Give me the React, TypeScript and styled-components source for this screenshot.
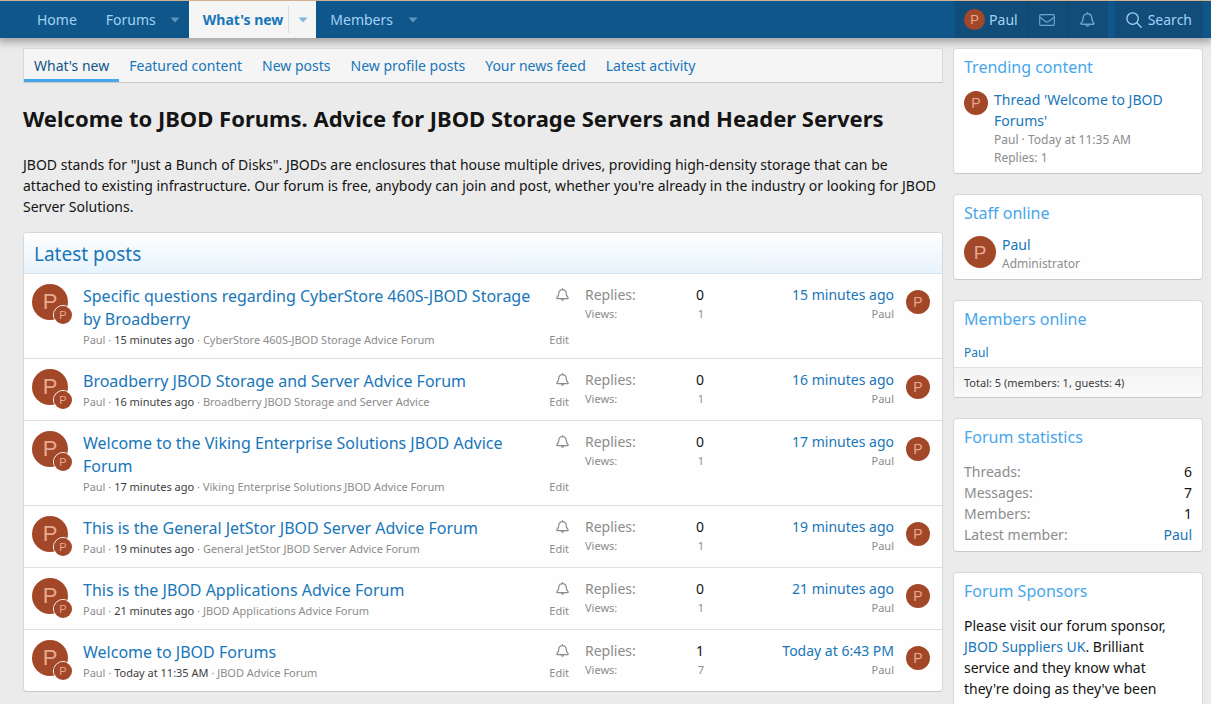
import React from "react";
import styled, { createGlobalStyle, css } from "styled-components";

const GlobalStyle = createGlobalStyle`
  *, *::before, *::after { box-sizing: border-box; }
  html { background: #ebebeb; }
  body {
    margin: 0;
    background: #ebebeb;
    color: #141414;
    font-family: "Noto Sans", "Open Sans", sans-serif;
    font-size: 14px;
    line-height: 21px;
  }
  h1, h2, h3, p, ul, dl, dd { margin: 0; padding: 0; }
  ul { list-style: none; }
  a { color: #1876b9; text-decoration: none; }
  a:hover { text-decoration: underline; }
  button { font: inherit; cursor: pointer; }
`;

const Page = styled.div`
  display: flex;
  flex-direction: column;
  min-height: 100vh;
`;

/* Header navigation */
const NavBar = styled.nav`
  display: flex;
  justify-content: space-between;
  height: 38px;
  padding: 0 8px 0 23px;
  border-top: 1px solid #cfb291;
  background: #0f578a;
  box-shadow: 0 2px 8px 2px rgba(0, 0, 0, 0.32);
`;

const NavList = styled.ul`
  display: flex;
`;

const NavItem = styled.li<{ $active?: boolean }>`
  display: flex;
  align-items: center;
  color: #a3d2f5;
  ${(p) => p.$active && css`
    background: #f5f5f5;
    color: #1876b9;
    font-weight: 700;
  `}
`;

const NavLink = styled.a<{ $plain?: boolean }>`
  padding: 0 ${(p) => (p.$plain ? 15 : 5)}px 0 14px;
  color: inherit;
`;

const NavArrow = styled.button<{ $active?: boolean }>`
  display: flex;
  align-items: center;
  justify-content: center;
  width: 28px;
  height: 27px;
  padding: 0;
  border: 0;
  border-left: 1px solid ${(p) => (p.$active ? "#cfdfeb" : "transparent")};
  background: none;
  color: ${(p) => (p.$active ? "#7fb5dc" : "#5a96c2")};
`;

const Tools = styled.div`
  display: flex;
  gap: 7px;
`;

const ToolGroup = styled.div`
  display: flex;
  background: #114d78;
`;

const Tool = styled.button`
  display: flex;
  align-items: center;
  gap: 4px;
  min-width: 40px;
  justify-content: center;
  padding: 0 9px;
  border: 0;
  border-right: 1px solid #10466d;
  background: none;
  color: #a3d2f5;
  &:last-child { border-right: 0; }
`;

const SearchTool = styled(Tool)`
  gap: 6px;
  padding: 0 11px;
`;

const MutedIcon = styled.span`
  display: flex;
  color: #6fa5cc;
`;

/* Avatars */
const Avatar = styled.span<{ $size: number }>`
  display: flex;
  align-items: center;
  justify-content: center;
  flex: none;
  width: ${(p) => p.$size}px;
  height: ${(p) => p.$size}px;
  border-radius: 50%;
  background: #a34729;
  color: #e6a98f;
  font-family: "Liberation Sans", Arial, sans-serif;
  font-size: ${(p) => Math.round(p.$size * 0.6)}px;
  line-height: 1;
`;

const AvatarStack = styled.a`
  position: relative;
  flex: none;
  width: 40px;
  height: 40px;
  margin-right: 11px;
`;

const AvatarBadge = styled.span`
  position: absolute;
  right: -1px;
  bottom: -1px;
  display: flex;
  border: 1px solid #fff;
  border-radius: 50%;
`;

/* Body */
const Body = styled.div`
  display: flex;
  flex: 1;
  gap: 10px;
  padding: 10px 8px 0 23px;
`;

const Main = styled.main`
  flex: 1;
  min-width: 0;
`;

const Tabs = styled.nav`
  display: flex;
  height: 35px;
  border: 1px solid #d8d8d8;
  border-bottom-color: #c8c8c8;
  background: #f5f5f5;
`;

const Tab = styled.a<{ $active?: boolean }>`
  padding: 6px 10px 0;
  border-bottom: 3px solid ${(p) => (p.$active ? "#47a7eb" : "transparent")};
  color: ${(p) => (p.$active ? "#0f578a" : "#1876b9")};
  white-space: nowrap;
`;

const PageTitle = styled.h1`
  margin-top: 19px;
  font-size: 22px;
  line-height: 33px;
  font-weight: 700;
`;

const Intro = styled.p`
  margin-top: 19px;
`;

const Block = styled.section`
  margin: 15px 0 14px;
  border: 1px solid #d8d8d8;
  border-bottom-color: #c8c8c8;
  border-radius: 4px;
  background: #fefefe;
  overflow: hidden;
`;

const BlockTitle = styled.h2`
  height: 41px;
  padding: 7px 10px 5px;
  border-bottom: 1px solid #d8e2ea;
  background: linear-gradient(#fefefe, #e7f3fc);
  color: #1876b9;
  font-size: 19px;
  line-height: 28px;
  font-weight: 400;
`;

const Row = styled.article`
  display: flex;
  align-items: flex-start;
  padding: 10px 12px 9px 8px;
  border-bottom: 1px solid #dfdfdf;
  &:last-child { border-bottom: 0; }
`;

const Thread = styled.div`
  display: grid;
  grid-template-columns: 1fr auto;
  column-gap: 8px;
  flex: 1;
  min-width: 0;
  padding-top: 1px;
`;

const ThreadTitle = styled.h3`
  font-size: 16px;
  line-height: 23px;
  font-weight: 400;
`;

const Minor = styled.div`
  color: #8c8c8c;
  font-size: 11px;
  line-height: 18px;
  a { color: inherit; }
  time { color: #3d3d3d; }
`;

const Watch = styled.button`
  justify-self: end;
  align-self: start;
  display: flex;
  padding: 3px 0 0;
  border: 0;
  background: none;
  color: #8c8c8c;
`;

const Stats = styled.dl`
  width: 119px;
  margin-left: 16px;
`;

const Pair = styled.div<{ $minor?: boolean }>`
  display: flex;
  justify-content: space-between;
  dt { color: #8c8c8c; }
  ${(p) => p.$minor && css`
    color: #8c8c8c;
    font-size: 11px;
    line-height: 17px;
  `}
`;

const Latest = styled.div`
  width: 190px;
  margin-right: 12px;
  text-align: right;
`;

const LatestAvatar = styled.a`
  margin-top: 6px;
`;

/* Sidebar */
const Sidebar = styled.aside`
  display: flex;
  flex-direction: column;
  gap: 20px;
  flex: none;
  width: 250px;
`;

const Card = styled.section<{ $grow?: boolean }>`
  border: 1px solid #d8d8d8;
  border-bottom-color: #c8c8c8;
  border-radius: 4px;
  background: #fefefe;
  ${(p) => p.$grow && css`
    flex: 1;
    border-bottom: 0;
    border-radius: 4px 4px 0 0;
  `}
`;

const CardTitle = styled.h3`
  padding: 6px 10px;
  color: #47a7eb;
  font-size: 16px;
  line-height: 25px;
  font-weight: 400;
`;

const CardBody = styled.div<{ $top?: number }>`
  padding: ${(p) => p.$top ?? 5}px 10px 6px;
`;

const MediaRow = styled.div`
  display: flex;
  align-items: flex-start;
  gap: 6px;
  ${Avatar} { margin-top: 2px; }
`;

const MediaText = styled.div`
  flex: 1;
  min-width: 0;
`;

const Small = styled.div`
  color: #8c8c8c;
  font-size: 12px;
  line-height: 18px;
`;

const MemberLink = styled.a`
  display: block;
  padding: 5px 10px;
  font-size: 12px;
  line-height: 19px;
`;

const CardFooter = styled.div`
  padding: 6px 10px;
  border-top: 1px solid #dfdfdf;
  border-radius: 0 0 4px 4px;
  background: linear-gradient(#f3f3f3, #fafafa);
  color: #3d3d3d;
  font-size: 11px;
  line-height: 17px;
`;

const Caret = () => (
  <svg width="10" height="6" viewBox="0 0 10 6" aria-hidden="true">
    <path d="M.5.5h9L5 5.5z" fill="currentColor" />
  </svg>
);

const BellIcon = ({ size = 13 }: { size?: number }) => (
  <svg width={size} height={size} viewBox="0 0 14 14" fill="none" stroke="currentColor" strokeWidth="1.3" strokeLinejoin="round" strokeLinecap="round" aria-hidden="true">
    <path d="M7 .7v1M7 1.7C4.5 1.7 3 3.5 3 5.6c0 2.7-.7 3.6-2 4.8-.4.4-.1 1 .4 1h11.2c.5 0 .8-.6.4-1-1.3-1.2-2-2.1-2-4.8 0-2.1-1.5-3.9-4-3.9z" />
    <path d="M5.5 12.5c.3 1.4 2.7 1.4 3 0z" fill="currentColor" strokeWidth=".6" />
  </svg>
);

const MailIcon = () => (
  <svg width="16" height="12" viewBox="0 0 16 12" fill="none" stroke="currentColor" strokeWidth="1.2" strokeLinejoin="round" aria-hidden="true">
    <rect x=".7" y=".7" width="14.6" height="10.6" rx="1.3" />
    <path d="M.9 3.2 6.5 7.5c1 .8 2 .8 3 0l5.6-4.3" />
  </svg>
);

const SearchIcon = () => (
  <svg width="16" height="16" viewBox="0 0 16 16" fill="none" stroke="currentColor" strokeWidth="1.3" strokeLinecap="round" aria-hidden="true">
    <circle cx="6.6" cy="6.6" r="5.7" />
    <path d="m10.8 10.8 4.4 4.4" />
  </svg>
);

const tabs = ["What's new", "Featured content", "New posts", "New profile posts", "Your news feed", "Latest activity"];

const threads = [
  { title: "Specific questions regarding CyberStore 460S-JBOD Storage by Broadberry", time: "15 minutes ago", forum: "CyberStore 460S-JBOD Storage Advice Forum", replies: 0, views: 1 },
  { title: "Broadberry JBOD Storage and Server Advice Forum", time: "16 minutes ago", forum: "Broadberry JBOD Storage and Server Advice", replies: 0, views: 1 },
  { title: "Welcome to the Viking Enterprise Solutions JBOD Advice Forum", time: "17 minutes ago", forum: "Viking Enterprise Solutions JBOD Advice Forum", replies: 0, views: 1 },
  { title: "This is the General JetStor JBOD Server Advice Forum", time: "19 minutes ago", forum: "General JetStor JBOD Server Advice Forum", replies: 0, views: 1 },
  { title: "This is the JBOD Applications Advice Forum", time: "21 minutes ago", forum: "JBOD Applications Advice Forum", replies: 0, views: 1 },
  { title: "Welcome to JBOD Forums", time: "Today at 11:35 AM", latest: "Today at 6:43 PM", forum: "JBOD Advice Forum", replies: 1, views: 7 },
];

const statistics = [
  ["Threads:", "6"],
  ["Messages:", "7"],
  ["Members:", "1"],
];

export default function App() {
  return (
    <Page>
      <GlobalStyle />
      <NavBar aria-label="Main">
        <NavList>
          <NavItem><NavLink href="#" $plain>Home</NavLink></NavItem>
          <NavItem>
            <NavLink href="#">Forums</NavLink>
            <NavArrow aria-label="Open Forums menu"><Caret /></NavArrow>
          </NavItem>
          <NavItem $active>
            <NavLink href="#">What's new</NavLink>
            <NavArrow $active aria-label="Open What's new menu"><Caret /></NavArrow>
          </NavItem>
          <NavItem>
            <NavLink href="#">Members</NavLink>
            <NavArrow aria-label="Open Members menu"><Caret /></NavArrow>
          </NavItem>
        </NavList>
        <Tools>
          <ToolGroup>
            <Tool><Avatar $size={21}>P</Avatar>Paul</Tool>
            <Tool aria-label="Conversations"><MutedIcon><MailIcon /></MutedIcon></Tool>
            <Tool aria-label="Alerts"><MutedIcon><BellIcon size={15} /></MutedIcon></Tool>
          </ToolGroup>
          <ToolGroup>
            <SearchTool><SearchIcon />Search</SearchTool>
          </ToolGroup>
        </Tools>
      </NavBar>

      <Body>
        <Main>
          <Tabs aria-label="What's new">
            {tabs.map((t, i) => <Tab key={t} href="#" $active={i === 0}>{t}</Tab>)}
          </Tabs>
          <PageTitle>Welcome to JBOD Forums. Advice for JBOD Storage Servers and Header Servers</PageTitle>
          <Intro>
            JBOD stands for "Just a Bunch of Disks". JBODs are enclosures that house multiple drives, providing high-density storage that can be attached to existing infrastructure. Our forum is free, anybody can join and post, whether you're already in the industry or looking for JBOD Server Solutions.
          </Intro>
          <Block>
            <BlockTitle>Latest posts</BlockTitle>
            {threads.map((t) => (
              <Row key={t.title}>
                <AvatarStack href="#" aria-label="Paul">
                  <Avatar $size={36}>P</Avatar>
                  <AvatarBadge><Avatar $size={18}>P</Avatar></AvatarBadge>
                </AvatarStack>
                <Thread>
                  <ThreadTitle><a href="#">{t.title}</a></ThreadTitle>
                  <Watch aria-label="Watched thread"><BellIcon /></Watch>
                  <Minor><a href="#">Paul</a> · <time>{t.time}</time> · <a href="#">{t.forum}</a></Minor>
                  <Minor><a href="#">Edit</a></Minor>
                </Thread>
                <Stats>
                  <Pair><dt>Replies:</dt><dd>{t.replies}</dd></Pair>
                  <Pair $minor><dt>Views:</dt><dd>{t.views}</dd></Pair>
                </Stats>
                <Latest>
                  <a href="#">{t.latest ?? t.time}</a>
                  <Minor><a href="#">Paul</a></Minor>
                </Latest>
                <LatestAvatar href="#" aria-label="Paul"><Avatar $size={24}>P</Avatar></LatestAvatar>
              </Row>
            ))}
          </Block>
        </Main>

        <Sidebar>
          <Card>
            <CardTitle>Trending content</CardTitle>
            <CardBody $top={3}>
              <MediaRow>
                <Avatar $size={24}>P</Avatar>
                <MediaText>
                  <a href="#">Thread 'Welcome to JBOD Forums'</a>
                  <Small>Paul · Today at 11:35 AM</Small>
                  <Small>Replies: 1</Small>
                </MediaText>
              </MediaRow>
            </CardBody>
          </Card>
          <Card>
            <CardTitle>Staff online</CardTitle>
            <CardBody $top={2}>
              <MediaRow>
                <Avatar $size={32}>P</Avatar>
                <MediaText>
                  <a href="#">Paul</a>
                  <Small>Administrator</Small>
                </MediaText>
              </MediaRow>
            </CardBody>
          </Card>
          <Card>
            <CardTitle>Members online</CardTitle>
            <MemberLink href="#">Paul</MemberLink>
            <CardFooter>Total: 5 (members: 1, guests: 4)</CardFooter>
          </Card>
          <Card>
            <CardTitle>Forum statistics</CardTitle>
            <CardBody>
              <dl>
                {statistics.map(([k, v]) => <Pair key={k}><dt>{k}</dt><dd>{v}</dd></Pair>)}
                <Pair><dt>Latest member:</dt><dd><a href="#">Paul</a></dd></Pair>
              </dl>
            </CardBody>
          </Card>
          <Card $grow>
            <CardTitle>Forum Sponsors</CardTitle>
            <CardBody>
              <p>Please visit our forum sponsor, <a href="#">JBOD Suppliers UK</a>. Brilliant service and they know what they're doing as they've been</p>
            </CardBody>
          </Card>
        </Sidebar>
      </Body>
    </Page>
  );
}
